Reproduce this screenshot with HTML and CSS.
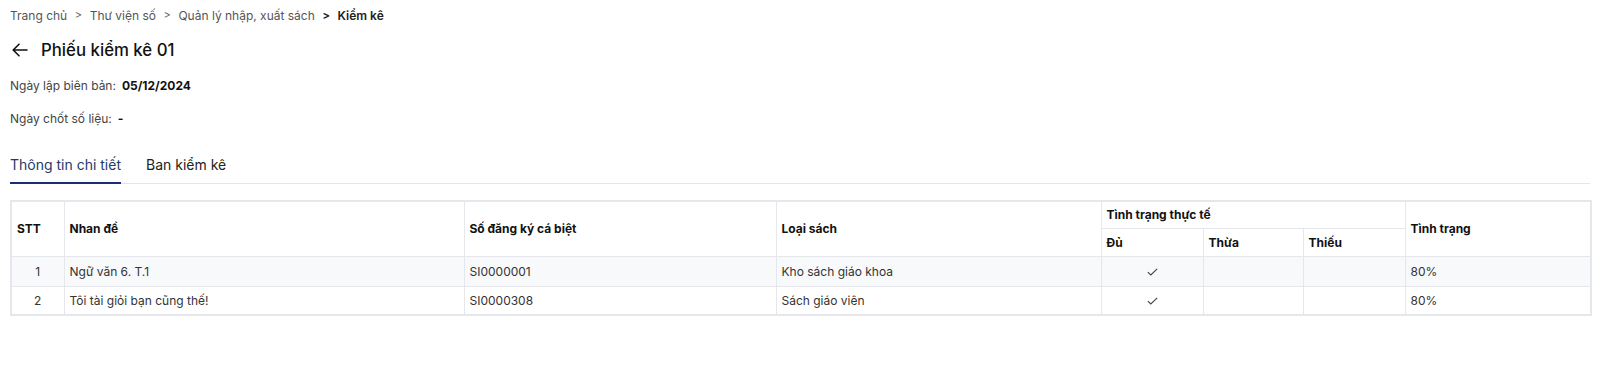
FILE: index.html
```html
<!DOCTYPE html>
<html lang="vi">
<head>
<meta charset="utf-8">
<title>Phiếu kiểm kê 01</title>
<link rel="stylesheet" href="styles.css">
</head>
<body>
<div class="page">
  <nav class="crumbs">
    <span class="crumb">Trang chủ</span>
    <span class="sep">&gt;</span>
    <span class="crumb">Thư viện số</span>
    <span class="sep">&gt;</span>
    <span class="crumb">Quản lý nhập, xuất sách</span>
    <span class="sep sep-strong">&gt;</span>
    <span class="crumb current">Kiểm kê</span>
  </nav>

  <div class="title-row">
    <svg class="back" width="16" height="14" viewBox="0 0 16 14" aria-hidden="true">
      <path d="M15 7H1.5M7 1.2L1.2 7L7 12.8" fill="none" stroke="#111" stroke-width="1.6" stroke-linecap="round" stroke-linejoin="round"/>
    </svg>
    <h1 class="title">Phiếu kiểm kê 01</h1>
  </div>

  <div class="info">
    <div class="info-row"><span class="label">Ngày lập biên bản:</span><span class="value">05/12/2024</span></div>
    <div class="info-row"><span class="label">Ngày chốt số liệu:</span><span class="value">-</span></div>
  </div>

  <div class="tabs">
    <div class="tab active">Thông tin chi tiết</div>
    <div class="tab">Ban kiểm kê</div>
  </div>

  <table class="grid">
    <colgroup>
      <col style="width:53px">
      <col style="width:400px">
      <col style="width:312px">
      <col style="width:325px">
      <col style="width:102px">
      <col style="width:100px">
      <col style="width:102px">
      <col style="width:186px">
    </colgroup>
    <thead>
      <tr class="h1">
        <th rowspan="2">STT</th>
        <th rowspan="2">Nhan đề</th>
        <th rowspan="2">Số đăng ký cá biệt</th>
        <th rowspan="2">Loại sách</th>
        <th colspan="3">Tình trạng thực tế</th>
        <th rowspan="2">Tình trạng</th>
      </tr>
      <tr class="h2">
        <th>Đủ</th>
        <th>Thừa</th>
        <th>Thiếu</th>
      </tr>
    </thead>
    <tbody>
      <tr class="odd">
        <td class="c">1</td>
        <td>Ngữ văn 6. T.1</td>
        <td>SI0000001</td>
        <td>Kho sách giáo khoa</td>
        <td class="c"><svg class="check" width="11" height="8" viewBox="0 0 11 8"><path d="M0.8 4.2L3.8 7L10.2 0.8" fill="none" stroke="#444" stroke-width="1.1"/></svg></td>
        <td></td>
        <td></td>
        <td>80%</td>
      </tr>
      <tr>
        <td class="c">2</td>
        <td>Tôi tài giỏi bạn cũng thế!</td>
        <td>SI0000308</td>
        <td>Sách giáo viên</td>
        <td class="c"><svg class="check" width="11" height="8" viewBox="0 0 11 8"><path d="M0.8 4.2L3.8 7L10.2 0.8" fill="none" stroke="#444" stroke-width="1.1"/></svg></td>
        <td></td>
        <td></td>
        <td>80%</td>
      </tr>
    </tbody>
  </table>
</div>
</body>
</html>
```

FILE: styles.css
```css
* { box-sizing: border-box; }
html, body { margin: 0; padding: 0; background: #fff; }
body {
  font-family: Inter, "Noto Sans", "Liberation Sans", sans-serif;
  color: #222;
  font-size: 12px;
}
.page { padding: 6px 10px 0 10px; }

.crumbs {
  display: flex;
  align-items: center;
  gap: 7.6px;
  height: 18px;
  font-size: 12px;
  color: #555;
}
.crumbs .sep { color: #666; font-size: 11px; }
.crumbs .sep-strong { color: #222; font-weight: 700; }
.crumbs .current { color: #222; font-weight: 600; }

.title-row {
  display: flex;
  align-items: center;
  gap: 13px;
  margin-top: 15px;
  height: 22px;
  padding-left: 2px;
}
.back { display: block; }
.title {
  margin: 0;
  font-size: 16.8px;
  font-weight: 500;
  color: #111;
}

.info { margin-top: 16px; }
.info-row {
  display: flex;
  gap: 6px;
  height: 33px;
  align-items: flex-start;
  font-size: 12px;
  line-height: 18px;
  color: #444;
}
.info-row .value { font-weight: 700; color: #111; }

.tabs {
  display: flex;
  gap: 25px;
  margin-top: 8px;
  border-bottom: 1px solid #e4e5ea;
  width: 1580px;
}
.tab {
  font-size: 14px;
  color: #222;
  padding: 5px 0 10px 0;
  margin-bottom: -1px;
}
.tab.active {
  color: #1f3a6b;
  border-bottom: 2px solid #1b2d7a;
  padding-bottom: 9px;
}

.grid {
  margin-top: 16px;
  width: 1580px;
  border-collapse: collapse;
  table-layout: fixed;
  border: 2px solid #e6e7ec;
  font-size: 12px;
}
.grid th, .grid td {
  border: 1px solid #e6e7ec;
  padding: 0 5px;
  text-align: left;
  vertical-align: middle;
}
.grid th { font-weight: 700; color: #111; }
.grid tr.h1 th { height: 27px; }
.grid tr.h2 th { height: 28px; }
.grid tbody td { height: 29px; color: #333; }
.grid tbody tr.odd td { background: #f8f9fb; height: 30px; }
.grid td.c { text-align: center; }
.check { display: inline-block; vertical-align: middle; }
```
